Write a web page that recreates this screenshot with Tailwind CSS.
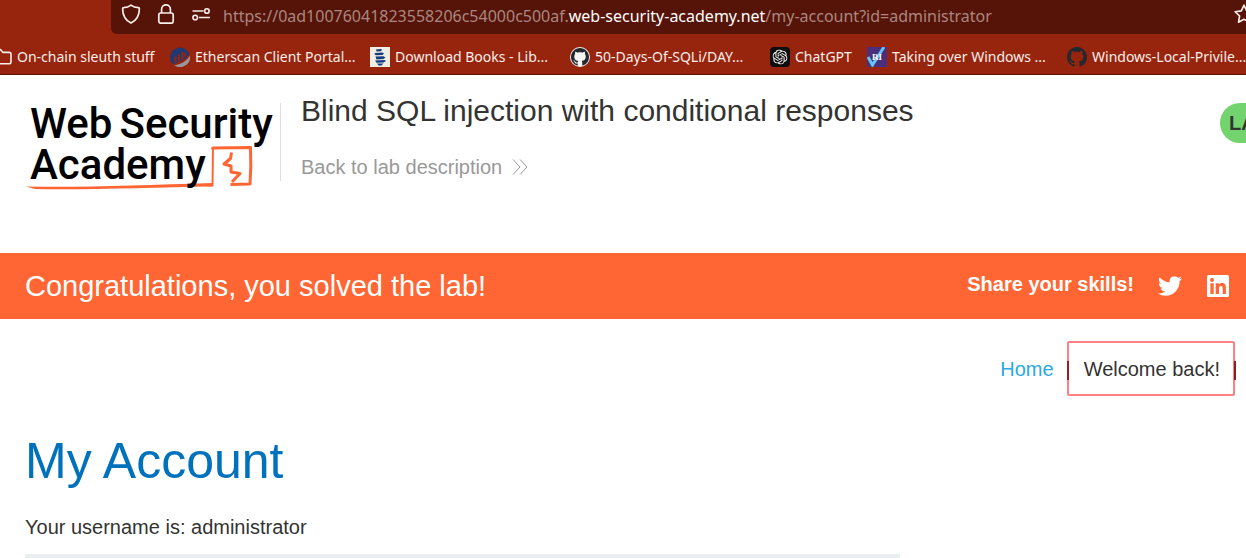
<!DOCTYPE html>
<html lang="en">
<head>
<meta charset="utf-8">
<meta name="viewport" content="width=device-width, initial-scale=1">
<title>Blind SQL injection with conditional responses</title>
<script src="https://cdn.jsdelivr.net/npm/@tailwindcss/browser@4"></script>
</head>
<body class="overflow-x-hidden bg-white font-['Liberation_Sans',Arial,sans-serif] text-[#333332]">
<svg class="hidden" aria-hidden="true">
  <symbol id="github" viewBox="0 0 16 16"><path d="M8 0C3.58 0 0 3.58 0 8c0 3.54 2.29 6.53 5.47 7.59.4.07.55-.17.55-.38 0-.19-.01-.82-.01-1.49-2.01.37-2.53-.49-2.69-.94-.09-.23-.48-.94-.82-1.13-.28-.15-.68-.52-.01-.53.63-.01 1.08.58 1.23.82.72 1.21 1.87.87 2.33.66.07-.52.28-.87.51-1.07-1.78-.2-3.64-.89-3.64-3.95 0-.87.31-1.59.82-2.15-.08-.2-.36-1.02.08-2.12 0 0 .67-.21 2.2.82.64-.18 1.32-.27 2-.27s1.36.09 2 .27c1.53-1.04 2.2-.82 2.2-.82.44 1.1.16 1.92.08 2.12.51.56.82 1.27.82 2.15 0 3.07-1.87 3.75-3.65 3.95.29.25.54.73.54 1.48 0 1.07-.01 1.93-.01 2.2 0 .21.15.46.55.38A8.01 8.01 0 0 0 16 8c0-4.42-3.58-8-8-8z"/></symbol>
</svg>

<header class="h-[75px] overflow-hidden border-b border-[#5e1408] bg-[#97240d] font-['Noto_Sans','Open_Sans',sans-serif] text-[#fbeeea]">
  <div class="ml-[111px] flex h-[34px] items-start overflow-hidden rounded-bl-md bg-[#561307]">
    <button class="ml-[10px] mt-[4px] shrink-0" aria-label="Tracking protection">
      <svg class="h-5 w-5" viewBox="0 0 20 20" fill="none" stroke="currentColor" stroke-width="1.7" stroke-linejoin="round"><path d="M10 1.1c2.2 1.7 4.9 2.4 7.4 2.5.7 0 1 .5 1 1.1C18.300 11.500 15.600 16.300 10 19.100 4.400 16.300 1.700 11.500 1.600 4.700c0-.6.3-1.100 1-1.100C5.100 3.500 7.800 2.800 10 1.100z"/></svg>
    </button>
    <button class="ml-[15px] mt-[4px] shrink-0" aria-label="Connection secure">
      <svg class="h-5 w-5" viewBox="0 0 20 20" fill="none" stroke="currentColor" stroke-width="1.700"><rect x="2.800" y="9" width="14.400" height="10.200" rx="2"/><path d="M5.600 9V5.200a4.400 4.400 0 0 1 8.800 0V9"/></svg>
    </button>
    <button class="ml-[15px] mt-[4px] shrink-0" aria-label="Site permissions">
      <svg class="h-5 w-5" viewBox="0 0 20 20" fill="none" stroke="currentColor" stroke-width="1.600"><path d="M1.500 7h11M8 13.500h11"/><circle cx="15.900" cy="7" r="2.300"/><circle cx="4.200" cy="13.500" r="2.300"/></svg>
    </button>
    <div role="textbox" contenteditable="true" aria-label="Address" class="ml-[12px] mt-[4px] flex-1 whitespace-nowrap text-[16px] leading-6 text-[#aa8780]">https://0ad10076041823558206c54000c500af.<span class="text-white">web-security-academy.net</span>/my-account?id=administrator</div>
    <button class="-mr-2 mt-[4px] shrink-0" aria-label="Bookmark this page">
      <svg class="h-5 w-5" viewBox="0 0 20 20" fill="none" stroke="currentColor" stroke-width="1.600" stroke-linejoin="round"><path d="M10 1.200l2.700 5.700 6.200.8-4.500 4.300 1.100 6.200L10 15.200l-5.500 3 1.100-6.200L1.100 7.700l6.200-.8z"/></svg>
    </button>
  </div>
  <nav aria-label="Bookmarks" class="-ml-2 flex gap-[15px] whitespace-nowrap pt-[13px] text-[14px] leading-5">
    <button class="flex w-[163px] shrink-0 items-center gap-[5px]">
      <svg class="h-5 w-5 shrink-0" viewBox="0 0 20 20" fill="none" stroke="currentColor" stroke-width="1.600"><path d="M2 4.500a2 2 0 0 1 2-2h4.300L11 5.400h6a2 2 0 0 1 2 2v7.400a2 2 0 0 1-2 2H4a2 2 0 0 1-2-2z"/></svg>
      <span>On-chain sleuth stuff</span>
    </button>
    <a href="#" class="flex w-[185px] shrink-0 items-center gap-[5px]">
      <svg class="h-5 w-5 shrink-0" viewBox="0 0 20 20"><path fill="#22386f" d="M2.500 17A10 10 0 1 1 19.300 6.600C17.500 11 11 15.500 2.500 17z"/><path fill="#97240d" d="M4.500 9.500h2v6h-2zM8 7.500h2v7H8zM11.500 5h2v7.500h-2zM14.500 6h1.500v4h-1.500z"/><path fill="#9a9696" d="M4.300 18.200C12 17.500 17.800 13 19.900 8.500A10 10 0 0 1 4.300 18.200z"/></svg>
      <span>Etherscan Client Portal...</span>
    </a>
    <a href="#" class="flex w-[185px] shrink-0 items-center gap-[5px]">
      <svg class="h-5 w-5 shrink-0" viewBox="0 0 20 20"><path fill="#f0eee2" d="M0 0h20v20H0z"/><path fill="#173a82" d="M6 2.500l5-.5 1 .6-1 1.600-4.500.3zM5 6l7.500-.5 1.500 1-1.500 1.500L6 8.300 4.500 7.200zM5.500 9.500l8-.3 2 1.300-2 1.600-7 .3zM5 13.500l9.500-.5 1.500 1-2.500 1.500-7 .2zM7 16.600l6.500-.2-2 2H8.500z"/></svg>
      <span>Download Books - Lib...</span>
    </a>
    <a href="#" class="flex w-[185px] shrink-0 items-center gap-[5px]">
      <svg class="h-5 w-5 shrink-0" viewBox="0 0 20 20"><circle cx="10" cy="10" r="10" fill="#f6f3f2"/><use href="#github" x="1" y="1" width="18" height="18" fill="#24292f"/></svg>
      <span>50-Days-Of-SQLi/DAY...</span>
    </a>
    <a href="#" class="flex w-[82px] shrink-0 items-center gap-[5px]">
      <svg class="h-5 w-5 shrink-0" viewBox="0 0 20 20"><rect width="20" height="20" rx="4" fill="#0d0d0d"/><svg x="2.500" y="2.500" width="15" height="15" viewBox="0 0 24 24"><path fill="#fff" d="M22.2819 9.8211a5.9847 5.9847 0 0 0-.5157-4.9108 6.0462 6.0462 0 0 0-6.5098-2.9A6.0651 6.0651 0 0 0 4.9807 4.1818a5.9847 5.9847 0 0 0-3.9977 2.9 6.0462 6.0462 0 0 0 .7427 7.0966 5.98 5.98 0 0 0 .511 4.9107 6.051 6.051 0 0 0 6.5146 2.9001A5.9847 5.9847 0 0 0 13.2599 24a6.0557 6.0557 0 0 0 5.7718-4.2058 5.9894 5.9894 0 0 0 3.9977-2.9001 6.0557 6.0557 0 0 0-.7475-7.0729zm-9.022 12.6081a4.4755 4.4755 0 0 1-2.8764-1.0408l.1419-.0804 4.7783-2.7582a.7948.7948 0 0 0 .3927-.6813v-6.7369l2.02 1.1686a.071.071 0 0 1 .038.052v5.5826a4.504 4.504 0 0 1-4.4945 4.4944zm-9.6607-4.1254a4.4708 4.4708 0 0 1-.5346-3.0137l.142.0852 4.783 2.7582a.7712.7712 0 0 0 .7806 0l5.8428-3.3685v2.3324a.0804.0804 0 0 1-.0332.0615L9.74 19.9502a4.4992 4.4992 0 0 1-6.1408-1.6464zM2.3408 7.8956a4.485 4.485 0 0 1 2.3655-1.9728V11.6a.7664.7664 0 0 0 .3879.6765l5.8144 3.3543-2.0201 1.1685a.0757.0757 0 0 1-.071 0l-4.8303-2.7865A4.504 4.504 0 0 1 2.3408 7.872zm16.5963 3.8558L13.1038 8.364 15.1192 7.2a.0757.0757 0 0 1 .071 0l4.8303 2.7913a4.4944 4.4944 0 0 1-.6765 8.1042v-5.6772a.79.79 0 0 0-.407-.667zm2.0107-3.0231l-.142-.0852-4.7735-2.7818a.7759.7759 0 0 0-.7854 0L9.409 9.2297V6.8974a.0662.0662 0 0 1 .0284-.0615l4.8303-2.7866a4.4992 4.4992 0 0 1 6.6802 4.66zM8.3065 12.863l-2.02-1.1638a.0804.0804 0 0 1-.038-.0567V6.0742a4.4992 4.4992 0 0 1 7.3757-3.4537l-.142.0805L8.704 5.459a.7948.7948 0 0 0-.3927.6813zm1.0976-2.3654l2.602-1.4998 2.6069 1.4998v2.9994l-2.5974 1.4997-2.6067-1.4997Z"/></svg></svg>
      <span>ChatGPT</span>
    </a>
    <a href="#" class="flex w-[185px] shrink-0 items-center gap-[5px]">
      <svg class="h-5 w-5 shrink-0" viewBox="0 0 20 20"><path fill="#4c2f7c" d="M0 0h20v20H0z"/><path fill="none" stroke="#62c4f2" stroke-width="3" d="M1 10l4.500 8L17 0"/><text x="5" y="13" font-size="9" font-weight="700" font-family="Liberation Serif, serif" fill="#fff">RI</text></svg>
      <span>Taking over Windows ...</span>
    </a>
    <a href="#" class="flex shrink-0 items-center gap-[5px]">
      <svg class="h-5 w-5 shrink-0 fill-[#24292f]"><use href="#github" width="20" height="20"/></svg>
      <span>Windows-Local-Privile...</span>
    </a>
  </nav>
</header>

<main>
  <section class="flex h-[178px] items-start pl-[25px] pt-[28px]">
    <a href="#" aria-label="Web Security Academy" class="relative block h-[88px] w-[255px] shrink-0 pl-[5px] font-['Roboto',sans-serif] text-[42px] font-medium leading-[41px] text-black">
      <svg class="absolute left-0 top-0 h-[88px] w-[250px]" viewBox="0 0 250 88" fill="none" stroke="#ff6633" stroke-linejoin="round" aria-hidden="true"><path fill="#ff6633" stroke="none" d="M1 83.500C60 84.500 120 82 187 80v3.500C130 84.500 60 87 10 86z"/><path stroke-width="2" d="M180 82l7.500.5.500-38"/><path stroke-width="3" d="M187 46.500l1-1.500 37.500-.5.300 19-.8 17.500-19.500.5"/><path stroke-width="3" d="M206.500 49.500l-1 6-6.500 5.500 7 2v6l9 1.500-8 8.500"/></svg>
      <span class="relative flex gap-[7px]"><span>Web</span><span>Security</span></span>
      <span class="relative block">Academy</span>
    </a>
    <div class="h-[78px] min-w-0 flex-1 border-l border-[#dddddd] pl-[20px]">
      <h2 class="-mt-[10px] text-[30px] leading-[36px]">Blind SQL injection with conditional responses</h2>
      <a href="#" class="mt-[26px] flex items-center gap-[10px] text-[20px] leading-6 text-[#999999]">Back to lab description
        <svg class="h-4 w-4" viewBox="0 0 16 16" fill="none" stroke="currentColor" aria-hidden="true"><path d="M1 .5L8 8l-7 7.500M8 .5L15 8l-7 7.500"/></svg>
      </a>
    </div>
    <div class="-mr-[60px] flex h-10 w-[86px] shrink-0 items-center rounded-full bg-[#73d36f] pl-[9px] text-[20px] font-bold">LAB</div>
  </section>

  <section class="flex h-[66px] items-center bg-[#ff6633] pl-[25px] pr-[16px] text-white">
    <h4 class="flex-1 text-[29px] leading-8">Congratulations, you solved the lab!</h4>
    <span class="mr-[24px] pb-1 text-[20px] font-bold leading-6">Share your skills!</span>
    <a href="#" aria-label="Share on Twitter" class="mr-[24px]"><svg class="h-6 w-6" viewBox="0 0 24 24" fill="currentColor"><path d="M23.953 4.570a10 10 0 0 1-2.825.775 4.958 4.958 0 0 0 2.163-2.723c-.951.555-2.005.959-3.127 1.184a4.920 4.920 0 0 0-8.384 4.482C7.690 8.095 4.067 6.130 1.640 3.162a4.822 4.822 0 0 0-.666 2.475c0 1.710.870 3.213 2.188 4.096a4.904 4.904 0 0 1-2.228-.616v.060a4.923 4.923 0 0 0 3.946 4.827 4.996 4.996 0 0 1-2.212.085 4.936 4.936 0 0 0 4.604 3.417 9.867 9.867 0 0 1-6.102 2.105c-.390 0-.779-.023-1.170-.067a13.995 13.995 0 0 0 7.557 2.209c9.053 0 13.998-7.496 13.998-13.985 0-.210 0-.420-.015-.630A9.935 9.935 0 0 0 24 4.590z"/></svg></a>
    <a href="#" aria-label="Share on LinkedIn"><svg class="h-6 w-6" viewBox="0 0 24 24"><rect x="1" y="1" width="22" height="22" rx="1.500" fill="#fff"/><g fill="#ff6633"><circle cx="6" cy="6" r="2"/><path d="M4.400 9.300h3.300V20H4.400zM9.700 9.300h3.100v1.500c.6-1.100 1.700-1.800 3.200-1.800 3.300 0 3.900 2.200 3.900 5V20h-3.200v-5.200c0-1.300 0-2.900-1.700-2.900s-2 1.400-2 2.800V20H9.700z"/></g></svg></a>
  </section>

  <nav class="flex h-[100px] justify-end pt-[38px] text-[20px] leading-6">
    <a href="#" class="mr-[13px] text-[#29aae1]">Home</a>
    <span class="relative z-10 mt-[4px] h-[19px] w-[2px] bg-[#a01c1c]"></span>
    <p class="relative pl-[15px] pr-[14px]">Welcome back!
      <span class="absolute -left-[2px] -top-[16px] -right-[1px] h-[55px] rounded-xs border-2 border-[#ff8080]"></span>
    </p>
    <span class="relative z-10 mr-[10px] mt-[4px] h-[19px] w-[2px] bg-[#8c2020]"></span>
  </nav>

  <section class="pl-[25px]">
    <h1 class="pt-[12px] text-[50px] leading-[60px] text-[#0071bc]">My Account</h1>
    <p class="mt-[24px] text-[20px] leading-6">Your username is: administrator</p>
    <div class="mt-[15px] h-1 w-[875px] max-w-full bg-[#eaf0f1]"></div>
  </section>
</main>
</body>
</html>
